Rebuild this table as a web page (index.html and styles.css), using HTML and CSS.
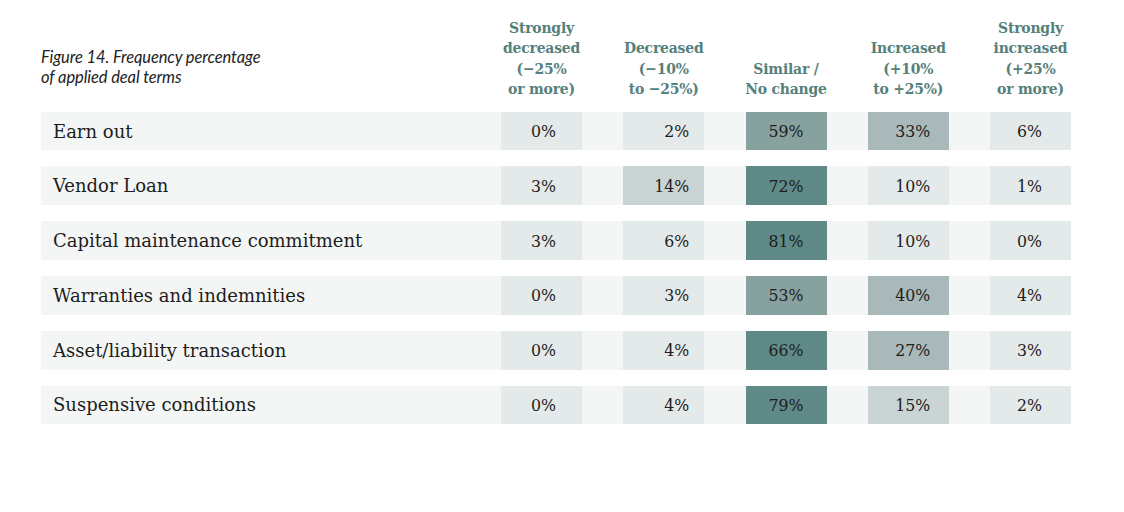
FILE: index.html
```html
<!DOCTYPE html>
<html lang="en">
<head>
<meta charset="utf-8">
<title>Figure 14. Frequency percentage of applied deal terms</title>
<link rel="stylesheet" href="styles.css">
</head>
<body>
<div class="figure">
  <div class="head">
    <p class="title">Figure 14. Frequency percentage<br>of applied deal terms</p>
    <div class="colhead"><span>Strongly</span><span>decreased</span><span>(−25%</span><span>or more)</span></div>
    <div class="colhead"><span>Decreased</span><span>(−10%</span><span>to −25%)</span></div>
    <div class="colhead"><span>Similar /</span><span>No change</span></div>
    <div class="colhead"><span>Increased</span><span>(+10%</span><span>to +25%)</span></div>
    <div class="colhead"><span>Strongly</span><span>increased</span><span>(+25%</span><span>or more)</span></div>
  </div>
  <div class="rows">
    <div class="row">
      <div class="label">Earn out</div>
      <div class="cell c1 l0">0%</div>
      <div class="cell c2 l0">2%</div>
      <div class="cell c3 l2">59%</div>
      <div class="cell c4 l1b">33%</div>
      <div class="cell c5 l0">6%</div>
    </div>
    <div class="row">
      <div class="label">Vendor Loan</div>
      <div class="cell c1 l0">3%</div>
      <div class="cell c2 l1">14%</div>
      <div class="cell c3 l3">72%</div>
      <div class="cell c4 l0">10%</div>
      <div class="cell c5 l0">1%</div>
    </div>
    <div class="row">
      <div class="label">Capital maintenance commitment</div>
      <div class="cell c1 l0">3%</div>
      <div class="cell c2 l0">6%</div>
      <div class="cell c3 l3">81%</div>
      <div class="cell c4 l0">10%</div>
      <div class="cell c5 l0">0%</div>
    </div>
    <div class="row">
      <div class="label">Warranties and indemnities</div>
      <div class="cell c1 l0">0%</div>
      <div class="cell c2 l0">3%</div>
      <div class="cell c3 l2">53%</div>
      <div class="cell c4 l1b">40%</div>
      <div class="cell c5 l0">4%</div>
    </div>
    <div class="row">
      <div class="label">Asset/liability transaction</div>
      <div class="cell c1 l0">0%</div>
      <div class="cell c2 l0">4%</div>
      <div class="cell c3 l3">66%</div>
      <div class="cell c4 l1b">27%</div>
      <div class="cell c5 l0">3%</div>
    </div>
    <div class="row">
      <div class="label">Suspensive conditions</div>
      <div class="cell c1 l0">0%</div>
      <div class="cell c2 l0">4%</div>
      <div class="cell c3 l3">79%</div>
      <div class="cell c4 l1">15%</div>
      <div class="cell c5 l0">2%</div>
    </div>
  </div>
</div>
</body>
</html>
```

FILE: styles.css
```css
html, body {
  margin: 0;
  padding: 0;
  background: #ffffff;
}

.figure {
  width: 1030px;
  padding: 18px 0 0 41px;
  font-family: "DejaVu Serif Condensed", "DejaVu Serif", serif;
  font-stretch: condensed;
  color: #1d1d1b;
}

.head,
.row {
  display: grid;
  grid-template-columns: 418.75px repeat(5, 81px);
  column-gap: 41.25px;
}

.head {
  align-items: end;
  margin-bottom: 12.5px;
}

.title {
  margin: 0 0 12px 0;
  font-family: Lato, "Open Sans", sans-serif;
  font-style: italic;
  font-size: 16.5px;
  line-height: 20px;
  color: #222222;
  letter-spacing: -0.1px;
  white-space: nowrap;
}

.colhead {
  display: flex;
  flex-direction: column;
  align-items: center;
  font-weight: bold;
  font-size: 15.5px;
  line-height: 20.3px;
  color: #55807b;
  white-space: nowrap;
  letter-spacing: -0.2px;
}

.rows {
  display: flex;
  flex-direction: column;
  gap: 16.1px;
}

.row {
  height: 38.7px;
  background: #f4f6f5;
  align-items: stretch;
}

.label {
  display: flex;
  align-items: center;
  padding-left: 12px;
  font-family: "DejaVu Serif", serif;
  font-stretch: normal;
  font-size: 18px;
  white-space: nowrap;
}

.cell {
  display: flex;
  align-items: center;
  justify-content: flex-end;
  font-size: 17.5px;
  color: #1d1d1b;
}

.c1 { padding-right: 26px; }
.c2 { padding-right: 15px; }
.c3 { padding-right: 23px; }
.c4 { padding-right: 18.5px; }
.c5 { padding-right: 29px; }

.l0 { background: #e4e9e9; }
.l1 { background: #cbd4d5; }
.l1b { background: #a9b8b9; }
.l2 { background: #87a19f; }
.l3 { background: #5f8a88; }
```
